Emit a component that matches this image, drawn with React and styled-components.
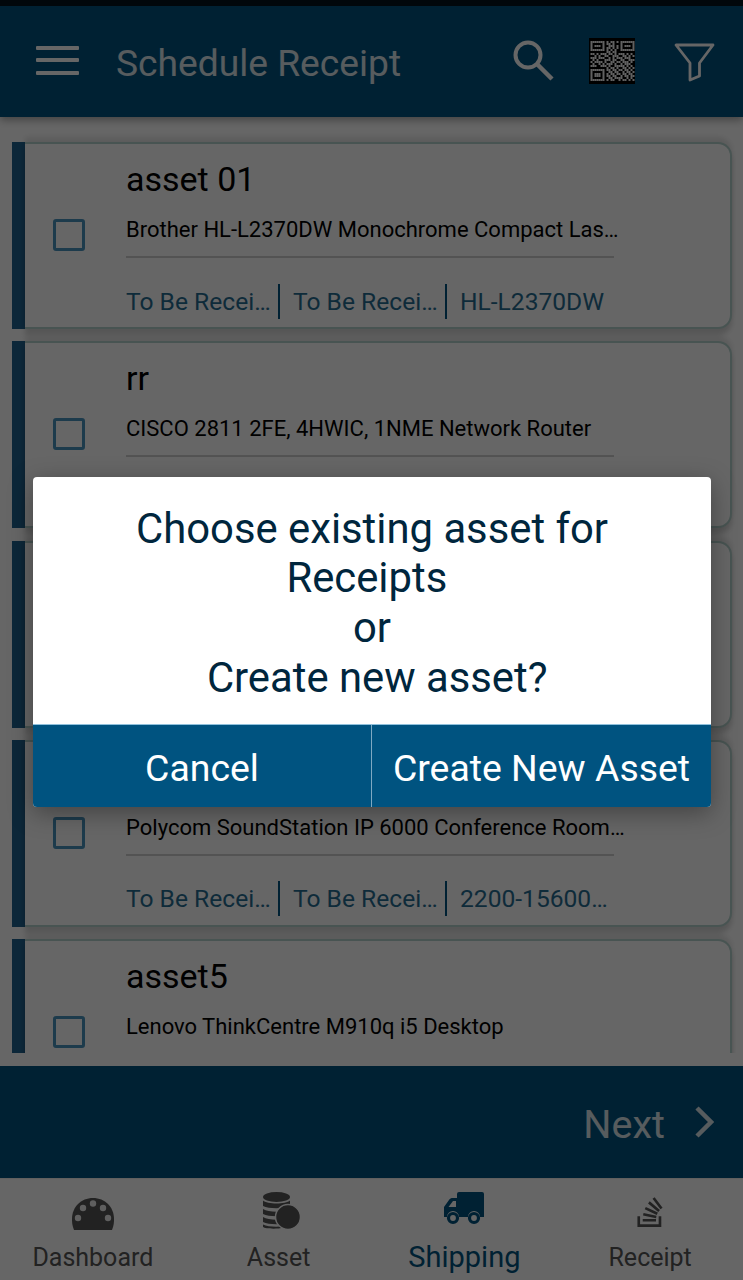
import React from "react";
import styled, { createGlobalStyle } from "styled-components";
import { FaStackOverflow } from "react-icons/fa";

const Global = createGlobalStyle`
  html, body { margin: 0; padding: 0; background: #fff; }
  * { box-sizing: border-box; }
  body { font-family: Roboto, "Liberation Sans", sans-serif; }
`;

const Screen = styled.div`
  position: relative;
  width: 743px;
  height: 1280px;
  overflow: hidden;
  display: flex;
  flex-direction: column;
  background: #fff;
`;
const StatusBar = styled.div`
  height: 6px;
  flex: none;
  background: #04131c;
  position: relative;
  z-index: 3;
`;
const Header = styled.header`
  height: 111px;
  flex: none;
  background: #005380;
  display: flex;
  align-items: center;
  padding: 0 28px 0 36px;
  box-shadow: 0 3px 8px rgba(0,0,0,.35);
  position: relative;
  z-index: 2;
`;
const Burger = styled.div`
  width: 43px;
  height: 29px;
  margin-top: -3px;
  display: flex;
  flex-direction: column;
  justify-content: space-between;
  span { display: block; height: 4px; background: #fff; border-radius: 1px; }
`;
const Title = styled.h1`
  margin: 4px 0 0 37px;
  flex: 1;
  font-size: 37.2px;
  font-weight: 400;
  color: #fff;
  opacity: .85;
  line-height: 1;
`;
const HeaderIcon = styled.svg`
  display: block;
  flex: none;
  margin-left: ${p => p.$gap}px;
  margin-top: ${p => p.$top}px;
`;
const List = styled.main`
  height: 936px;
  flex: none;
  overflow: hidden;
  padding: 25px 11px 0 12px;
  display: flex;
  flex-direction: column;
  gap: 13.25px;
`;
const Card = styled.article`
  flex: none;
  height: 186px;
  display: grid;
  grid-template-columns: 13px 1fr;
`;
const Accent = styled.div`
  background: #20628f;
  height: 187px;
`;
const CardBody = styled.div`
  height: 187px;
  border: 2px solid #b4d2cd;
  border-left: none;
  border-radius: 0 14px 14px 0;
  background: #fff;
  box-shadow: 0 6px 5px rgba(0,0,0,.16), 0 -5px 5px rgba(0,0,0,.1);
  display: grid;
  grid-template-columns: 101px 1fr;
`;
const CheckCell = styled.div`
  display: flex;
  padding: 75px 0 0 28px;
`;
const Check = styled.div`
  width: 32px;
  height: 32px;
  border: 3px solid #4a93bd;
  border-radius: 3px;
`;
const Content = styled.div`
  display: flex;
  flex-direction: column;
`;
const CardTitle = styled.div`
  font-size: 34px;
  line-height: 40px;
  margin-top: 15px;
  color: #000;
`;
const Desc = styled.div`
  font-size: 22px;
  line-height: 26px;
  margin-top: 18px;
  width: 500px;
  color: #000;
  white-space: nowrap;
  overflow: hidden;
  text-overflow: ellipsis;
`;
const Divider = styled.div`
  width: 488px;
  height: 2px;
  margin-top: 13px;
  background: #cfcfcf;
`;
const Meta = styled.div`
  display: flex;
  margin-top: 25px;
  height: 36px;
  align-items: center;
`;
const MetaCell = styled.span`
  font-size: 24.6px;
  color: #005380;
  opacity: .85;
  white-space: nowrap;
  overflow: hidden;
  text-overflow: ellipsis;
  flex: none;
  width: ${p => (p.$wide ? "152px" : "145px")};
`;
const MetaSep = styled.i`
  display: block;
  flex: none;
  width: 2px;
  height: 35px;
  margin: 0 13px 0 7px;
  background: #005380;
`;
const Spacer = styled.div`
  height: 13px;
  flex: none;
`;
const Footer = styled.div`
  height: 112px;
  flex: none;
  background: #005380;
  display: flex;
  align-items: center;
  justify-content: flex-end;
  padding: 0 29px 0 0;
  gap: 29px;
`;
const NextLabel = styled.span`
  font-size: 39.5px;
  margin-top: 4px;
  color: #fff;
  opacity: .85;
`;
const Tabs = styled.nav`
  flex: 1;
  display: grid;
  grid-template-columns: repeat(4, 1fr);
  border-top: 1px solid #f0f0f0;
`;
const Tab = styled.div`
  display: flex;
  flex-direction: column;
  align-items: center;
  color: ${p => (p.$active ? "#005380" : "#555")};
`;
const TabIcon = styled.div`
  height: 57px;
  padding-top: ${p => p.$top}px;
  padding-left: ${p => p.$shift || 0}px;
  display: flex;
  align-items: flex-start;
  justify-content: center;
`;
const TabLabel = styled.span`
  margin-top: ${p => (p.$active ? 5 : 7)}px;
  font-size: ${p => (p.$active ? 29 : 25)}px;
  line-height: ${p => (p.$active ? 32 : 30)}px;
`;
const Overlay = styled.div`
  position: absolute;
  inset: 0;
  background: rgba(0,0,0,.6);
  z-index: 5;
`;
const Modal = styled.div`
  position: absolute;
  z-index: 6;
  left: 33px;
  top: 477px;
  width: 678px;
  height: 330px;
  border-radius: 4px;
  overflow: hidden;
  background: #fff;
  box-shadow: 0 6px 24px rgba(0,0,0,.35);
  display: flex;
  flex-direction: column;
`;
const Message = styled.div`
  height: 247px;
  flex: none;
  padding-top: 26.5px;
  text-align: center;
  font-size: 41.8px;
  line-height: 49.7px;
  color: #00263d;
  white-space: pre-line;
`;
const Actions = styled.div`
  flex: 1;
  display: grid;
  grid-template-columns: 338px 1fr;
  border-top: 1px solid #8fc0dc;
  background: #005380;
`;
const Action = styled.button`
  border: none;
  padding: 3px 0 0;
  margin: 0;
  background: none;
  color: #fff;
  font: 400 37.4px Roboto, sans-serif;
  white-space: nowrap;
  border-left: ${p => (p.$split ? "1px solid #7fa9c2" : "none")};
`;

const QR = [
  "1111111010110101111111",
  "1000001011010001000001",
  "1011101001110101011101",
  "1000001011010101000001",
  "1111111010101001111111",
  "0000000011011000000000",
  "1101011101101011101010",
  "0010100110011100110101",
  "1110111001010111011100",
  "0101000111011001100111",
  "1011110100110110111010",
  "0100101011101001011100",
  "1110011101001111101010",
  "0000000010110100110101",
  "1111111011011011011010",
  "1000001001101100101101",
  "1011101010110110110110",
  "1011101011011001011011",
  "1000001001101111001010",
  "1111111010110010110101",
];

const QrIcon = () => (
  <HeaderIcon $gap={35} $top={-1} width="46" height="46" viewBox="0 0 46 46">
    <rect width="46" height="46" fill="#000" />
    {QR.map((row, y) =>
      [...row].map((c, x) =>
        c === "1" ? (
          <rect key={x + "-" + y} x={1.5 + x * 2} y={3 + y * 2} width="2" height="2" fill="#fff" opacity=".95" />
        ) : null
      )
    )}
  </HeaderIcon>
);

const DashIcon = () => (
  <svg width="42" height="32" viewBox="0 0 42 32">
    <path fill="currentColor" d="M2 32 C0 27 0 24 0 21 C0 9 9 0 21 0 C33 0 42 9 42 21 C42 24 42 27 40 32 Z" />
    <g fill="#fff" opacity=".9">
      <circle cx="6" cy="20" r="3.2" /><circle cx="11" cy="10" r="3.2" /><circle cx="21" cy="5.5" r="3.2" />
      <circle cx="31" cy="10" r="3.2" /><circle cx="36" cy="20" r="3.2" />
    </g>
  </svg>
);
const AssetIcon = () => (
  <svg width="38" height="38" viewBox="0 0 38 38">
    <g fill="currentColor">
      <ellipse cx="13.5" cy="5" rx="13.5" ry="5" />
      <path d="M0 8.5 C4 12.5 23 12.5 27 8.5 V14 C20 17 6 17 0 14 Z" />
      <path d="M0 17 C6 20.5 20 20.5 27 17 V22 C20 25 6 25 0 22 Z" />
      <path d="M0 25 C6 28.5 20 28.5 27 25 V30 C20 33 6 33 0 30 Z" />
      <path d="M0 32.5 C6 35.5 20 35.5 27 32.5 C24 37.5 3 37.5 0 35 Z" />
    </g>
    <circle cx="25" cy="25" r="12.5" fill="currentColor" stroke="#fff" strokeWidth="1.5" />
  </svg>
);
const TruckIcon = () => (
  <svg width="40" height="33" viewBox="0 0 40 33">
    <path fill="currentColor" fillRule="evenodd" d="M15 0 H38 a2 2 0 0 1 2 2 V25 H36 a6 6 0 0 0 -12 0 H15 a6 6 0 0 0 -12 0 H0 V15 L5 8 C6 6.5 7 6 9 6 H13 V2 a2 2 0 0 1 2 -2 Z M9 9 L4.5 15 H12 V9 Z" />
    <circle cx="9" cy="26" r="4.5" fill="none" stroke="currentColor" strokeWidth="3.2" />
    <circle cx="30" cy="26" r="4.5" fill="none" stroke="currentColor" strokeWidth="3.2" />
  </svg>
);

const rows = [
  { t: "asset 01", d: "Brother HL-L2370DW Monochrome Compact Laser Printer", m: "HL-L2370DW" },
  { t: "rr", d: "CISCO 2811 2FE, 4HWIC, 1NME Network Router", m: "CISCO2811" },
  { t: "asset3", d: "Dell UltraSharp U2415 24 Inch Monitor", m: "U2415" },
  { t: "asset4", d: "Polycom SoundStation IP 6000 Conference Room Phone", m: "2200-15600-001" },
  { t: "asset5", d: "Lenovo ThinkCentre M910q i5 Desktop", m: "M910q" },
];

export default function App() {
  return (
    <Screen>
      <Global />
      <StatusBar />
      <Header>
        <Burger><span /><span /><span /></Burger>
        <Title>Schedule Receipt</Title>
        <HeaderIcon $gap={0} $top={-3} width="41" height="41" viewBox="0 0 41 41" fill="none" stroke="#fff" strokeWidth="4">
          <circle cx="15" cy="15" r="12.5" />
          <path d="M24 24 L39 39" strokeWidth="4.5" />
        </HeaderIcon>
        <QrIcon />
        <HeaderIcon $gap={39} $top={1} width="41" height="39" viewBox="0 0 41 39" fill="none" stroke="#fff" strokeWidth="2.8" strokeLinejoin="round">
          <path d="M2 2 H39 L25.5 20 V33 L16 37 V20 Z" />
        </HeaderIcon>
      </Header>
      <List>
        {rows.map(r => (
          <Card key={r.t}>
            <Accent />
            <CardBody>
              <CheckCell><Check /></CheckCell>
              <Content>
                <CardTitle>{r.t}</CardTitle>
                <Desc>{r.d}</Desc>
                <Divider />
                <Meta>
                  <MetaCell>To Be Received</MetaCell>
                  <MetaSep />
                  <MetaCell>To Be Received</MetaCell>
                  <MetaSep />
                  <MetaCell $wide>{r.m}</MetaCell>
                </Meta>
              </Content>
            </CardBody>
          </Card>
        ))}
      </List>
      <Spacer />
      <Footer>
        <NextLabel>Next</NextLabel>
        <svg width="20" height="32" viewBox="0 0 20 32" fill="none" stroke="#fff" strokeOpacity=".85" strokeWidth="4.5">
          <path d="M3 2 L17 16 L3 30" />
        </svg>
      </Footer>
      <Tabs>
        <Tab><TabIcon $top={19}><DashIcon /></TabIcon><TabLabel>Dashboard</TabLabel></Tab>
        <Tab><TabIcon $top={13} $shift={6}><AssetIcon /></TabIcon><TabLabel>Asset</TabLabel></Tab>
        <Tab $active><TabIcon $top={13}><TruckIcon /></TabIcon><TabLabel $active>Shipping</TabLabel></Tab>
        <Tab><TabIcon $top={16}><FaStackOverflow size={34} /></TabIcon><TabLabel>Receipt</TabLabel></Tab>
      </Tabs>
      <Overlay />
      <Modal>
        <Message>{"Choose existing asset for\nReceipts\u00a0\nor\n\u00a0Create new asset?"}</Message>
        <Actions>
          <Action>Cancel</Action>
          <Action $split>Create New Asset</Action>
        </Actions>
      </Modal>
    </Screen>
  );
}
